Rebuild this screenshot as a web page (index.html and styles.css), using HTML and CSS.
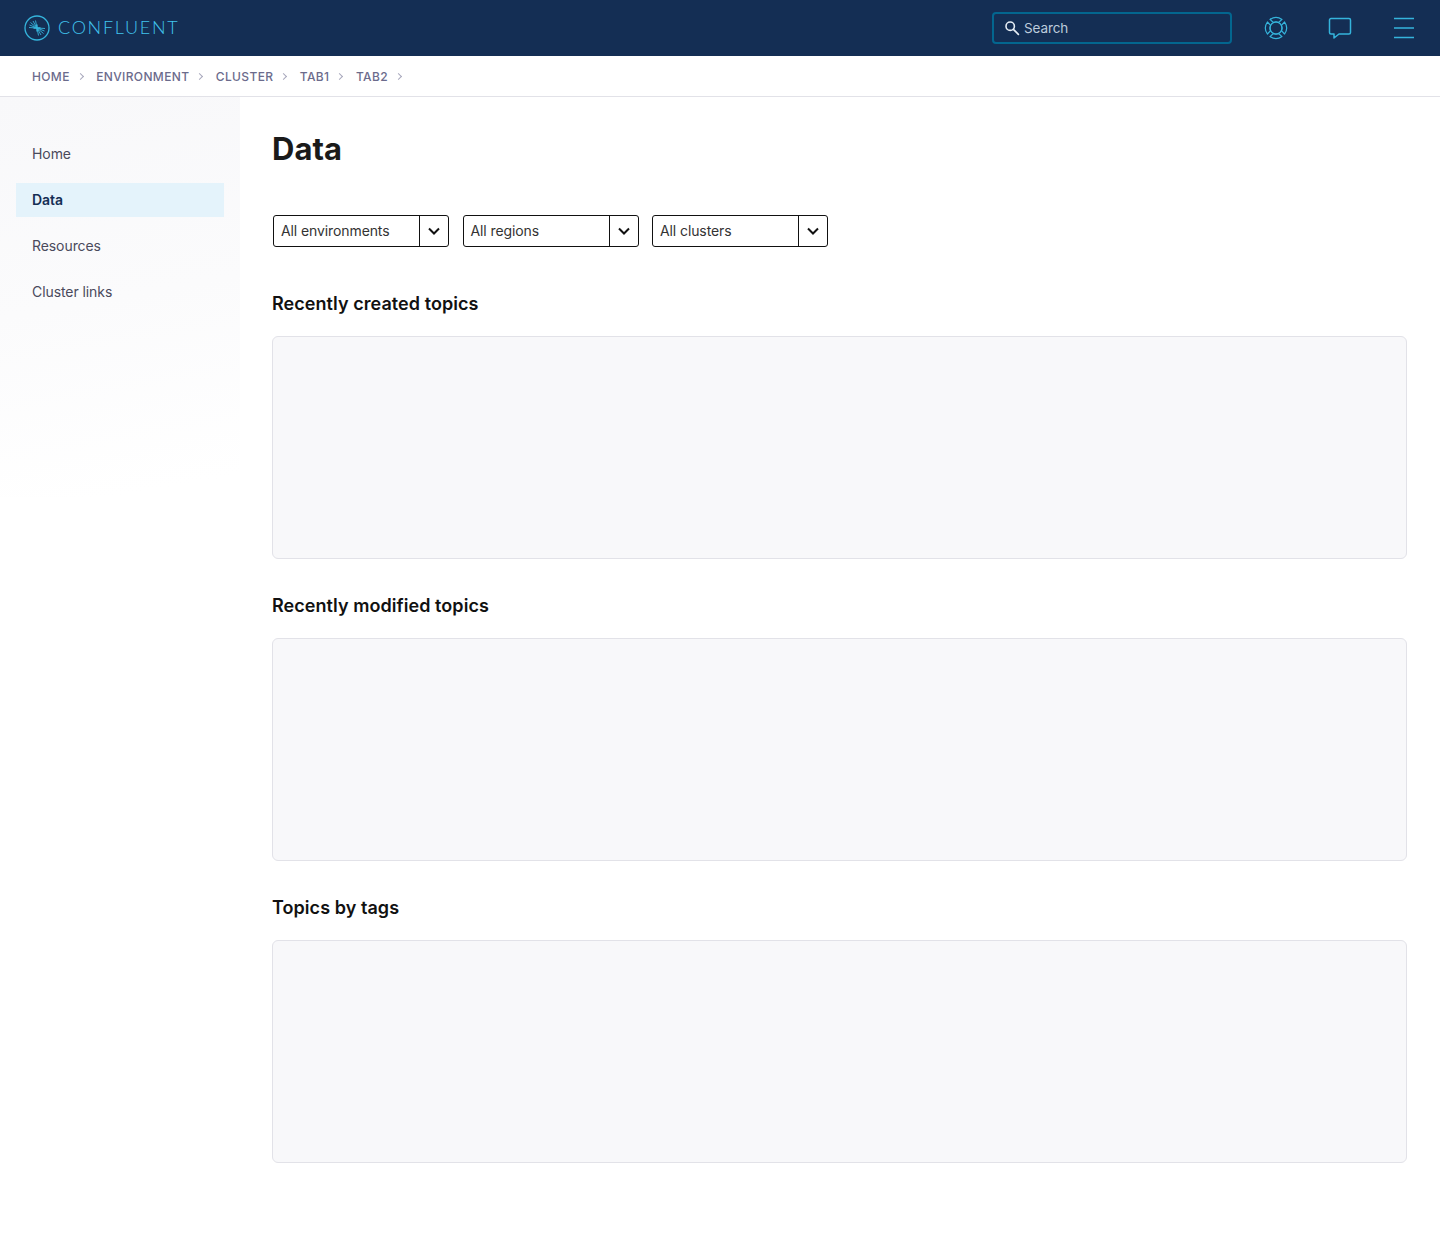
FILE: index.html
```html
<!DOCTYPE html>
<html lang="en">
<head>
<meta charset="utf-8">
<title>Data</title>
<link rel="stylesheet" href="styles.css">
</head>
<body>
<header class="topbar">
  <a class="brand">
    <svg class="brand-mark" width="26" height="26" viewBox="0 0 26 26" fill="none" stroke="#35b4dc">
      <circle cx="13" cy="13" r="12" stroke-width="1.3"/>
      <path stroke-width=".9" d="M13 13 6.500 7.500M13 13 9 6M13 13 11.500 5.500M13 13 5.500 10M13 13 5 12.500M13 13 19.500 18.500M13 13 17 20M13 13 14.500 20.500M13 13 20.500 16M13 13 21 13.500"/>
      <path stroke-width="1.300" d="M9.500 13h7M13 9.500v7"/>
    </svg>
    <span class="brand-name">CONFLUENT</span>
  </a>
  <div class="search">
    <svg width="16" height="16" viewBox="0 0 16 16" fill="none" stroke="#e6eef5" stroke-width="1.600">
      <circle cx="6.200" cy="6.200" r="4.200"/>
      <path d="m9.400 9.400 5 5" stroke-linecap="round"/>
    </svg>
    <span>Search</span>
  </div>
  <button class="icon-btn" aria-label="Help">
    <svg width="24" height="24" viewBox="0 0 24 24" fill="none" stroke="#35b4dc" stroke-width="1.200" stroke-linejoin="round">
      <circle cx="12" cy="12" r="6"/>
      <path d="M5.980 3.400A10.500 10.500 0 0 1 18.020 3.400L14.540 6.560A6 6 0 0 0 9.460 6.560Z"/>
      <path transform="rotate(90 12 12)" d="M5.980 3.400A10.500 10.500 0 0 1 18.020 3.400L14.540 6.560A6 6 0 0 0 9.460 6.560Z"/>
      <path transform="rotate(180 12 12)" d="M5.980 3.400A10.500 10.500 0 0 1 18.020 3.400L14.540 6.560A6 6 0 0 0 9.460 6.560Z"/>
      <path transform="rotate(270 12 12)" d="M5.980 3.400A10.500 10.500 0 0 1 18.020 3.400L14.540 6.560A6 6 0 0 0 9.460 6.560Z"/>
    </svg>
  </button>
  <button class="icon-btn" aria-label="Messages">
    <svg width="24" height="24" viewBox="0 0 24 24" fill="none" stroke="#35b4dc" stroke-width="1.500" stroke-linejoin="round">
      <path d="M3 2.500h18a1.500 1.500 0 0 1 1.500 1.500v12.500a1.500 1.500 0 0 1-1.500 1.500H11l-5 4v-4H3a1.500 1.500 0 0 1-1.500-1.500V4A1.500 1.500 0 0 1 3 2.500Z"/>
    </svg>
  </button>
  <button class="icon-btn" aria-label="Menu">
    <svg width="24" height="24" viewBox="0 0 24 24" fill="none" stroke="#35b4dc" stroke-width="1.500">
      <path d="M2 2.500h20M2 12h20M2 21.500h20"/>
    </svg>
  </button>
</header>
<nav class="crumbs">
  <a>HOME</a><i class="sep"></i>
  <a>ENVIRONMENT</a><i class="sep"></i>
  <a>CLUSTER</a><i class="sep"></i>
  <a>TAB1</a><i class="sep"></i>
  <a>TAB2</a><i class="sep"></i>
</nav>
<div class="layout">
  <aside class="sidebar">
    <a class="nav-item">Home</a>
    <a class="nav-item active">Data</a>
    <a class="nav-item">Resources</a>
    <a class="nav-item">Cluster links</a>
  </aside>
  <main class="content">
    <h1>Data</h1>
    <div class="filters">
      <div class="select"><span class="select-label">All environments</span><span class="select-arrow"><svg width="14" height="14" viewBox="0 0 14 14" fill="none" stroke="#111" stroke-width="2"><path d="m2 4.500 5 5 5-5"/></svg></span></div>
      <div class="select"><span class="select-label">All regions</span><span class="select-arrow"><svg width="14" height="14" viewBox="0 0 14 14" fill="none" stroke="#111" stroke-width="2"><path d="m2 4.500 5 5 5-5"/></svg></span></div>
      <div class="select"><span class="select-label">All clusters</span><span class="select-arrow"><svg width="14" height="14" viewBox="0 0 14 14" fill="none" stroke="#111" stroke-width="2"><path d="m2 4.500 5 5 5-5"/></svg></span></div>
    </div>
    <section class="panel-group">
      <h2>Recently created topics</h2>
      <div class="panel"></div>
    </section>
    <section class="panel-group">
      <h2>Recently modified topics</h2>
      <div class="panel"></div>
    </section>
    <section class="panel-group">
      <h2>Topics by tags</h2>
      <div class="panel"></div>
    </section>
  </main>
</div>
</body>
</html>
```
FILE: styles.css
```css
* { box-sizing: border-box; }
html, body { margin: 0; padding: 0; }
body { font-family: Inter, "Liberation Sans", sans-serif; background: #fff; color: #111; min-height: 1238px; }
.topbar { height: 56px; background: #142e54; display: flex; align-items: center; padding: 0 24px; }
.brand { display: flex; align-items: center; gap: 8px; margin-right: auto; }
.brand-mark { display: block; }
.brand-name { font-family: Lato, sans-serif; font-weight: 300; font-size: 18px; line-height: 22px; padding-bottom: 2px; letter-spacing: 1.700px; color: #41c4ee; }
.search { width: 240px; height: 32px; border: 2px solid #03668f; border-radius: 4px; display: flex; align-items: center; gap: 4px; padding: 0 10px; color: #bccbdc; font-size: 13.500px; letter-spacing: -.1px; margin-right: 32px; }
.search svg { margin-top: -1px; }
.icon-btn { width: 24px; height: 24px; padding: 0; border: 0; background: none; margin-left: 40px; }
.search + .icon-btn { margin-left: 0; }
.icon-btn svg { display: block; }
.crumbs { height: 41px; border-bottom: 1px solid #e2e2e8; display: flex; align-items: center; padding-left: 32px; font-size: 12px; font-weight: 500; letter-spacing: .35px; color: #6b6b8c; }
.sep { width: 5px; height: 5px; border-top: 1px solid #a8a8bc; border-right: 1px solid #a8a8bc; transform: rotate(45deg); margin: 0 13.500px 0 8px; }
.layout { display: flex; }
.sidebar { width: 240px; height: 400px; flex: none; padding: 40px 16px 0; background: linear-gradient(170deg, #f8f8fa 0%, #fbfbfc 50%, #fff 95%); display: flex; flex-direction: column; gap: 12px; }
.nav-item { height: 34px; line-height: 34px; padding-left: 16px; font-size: 14px; letter-spacing: -.08px; color: #4a4a5c; }
.nav-item.active { background: #e4f3fb; color: #142e54; font-weight: 600; }
.content { flex: 1; padding: 0 33px 0 32px; }
h1 { margin: 32px 0 0; font-size: 31px; line-height: 40px; font-weight: 700; color: #1a1a1a; }
.filters { display: flex; gap: 13.500px; margin-top: 46px; padding-left: 1px; }
.select { width: 176px; height: 32px; border: 1px solid #111; border-radius: 3px; display: flex; font-size: 14px; letter-spacing: -.1px; color: #333; }
.select-label { flex: 1; padding-left: 7px; line-height: 30px; }
.select-arrow { width: 29px; border-left: 1px solid #111; display: flex; align-items: center; justify-content: center; }
.panel-group { margin-top: 36px; }
.filters + .panel-group { margin-top: 46px; }
h2 { margin: 0 0 21px; font-size: 18px; line-height: 22px; font-weight: 600; letter-spacing: .06px; color: #111; }
.panel { height: 223px; background: #f8f8fa; border: 1px solid #e2e2e8; border-radius: 6px; }
```
